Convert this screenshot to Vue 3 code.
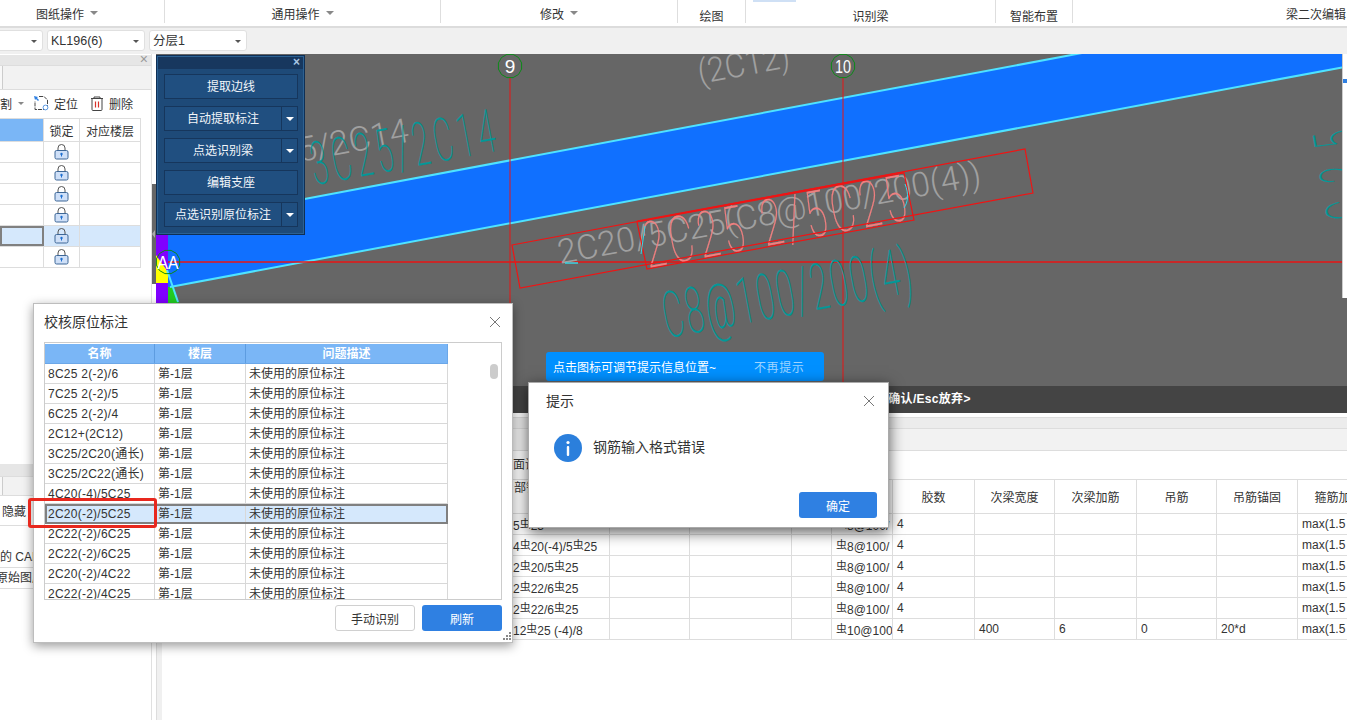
<template>
  <div class="app">
    <div class="toolbar">
      <div
        v-for="group in ribbon"
        :key="group.name"
        class="ribbon-group"
        :class="[group.cls, { low: group.low }]"
      >
        <span>{{ group.name }}</span>
        <i v-if="group.caret" class="caret grey"></i>
        <b v-if="group.name === '识别梁'" class="active-tab"></b>
      </div>
    </div>

    <div class="subbar">
      <div class="select first"><i class="caret dark"></i></div>
      <div class="select">KL196(6)<i class="caret dark"></i></div>
      <div class="select">分层1<i class="caret dark"></i></div>
    </div>

    <div class="main">
      <aside class="left">
        <div class="panel-head"><span class="panel-x">×</span></div>
        <div class="tabs"><div class="tab"></div></div>
        <div class="actions">
          <span class="act-cut">割</span>
          <i class="caret grey small"></i>
          <svg class="act-icon locate" width="16" height="16" viewBox="0 0 16 16">
            <path d="M6 1.5h5l3.5 3.5v9.5H2V6" fill="none" stroke="#444" stroke-width="1" stroke-dasharray="4 1" />
            <path d="M1 1l4 1-1 1 2 2-1 1-2-2-1 1z" fill="#2f80e2" />
            <circle cx="12.5" cy="12.5" r="2.4" fill="#fff" stroke="#5a9ae6" />
          </svg>
          <span class="act-label">定位</span>
          <svg class="act-icon trash" width="14" height="15" viewBox="0 0 14 15">
            <path d="M1 2.5h12M4 2.5V1h6v1.5M2 2.5v11a1 1 0 0 0 1 1h8a1 1 0 0 0 1-1v-11" fill="none" stroke="#444" />
            <path d="M5.5 5.5v6M8.5 5.5v6" stroke="#d8322a" stroke-width="1.2" />
          </svg>
          <span class="act-label">删除</span>
        </div>
        <div class="layer-table">
          <div class="layer-row head">
            <div class="c1"></div>
            <div class="c2">锁定</div>
            <div class="c3">对应楼层</div>
          </div>
          <div v-for="n in 6" :key="n" class="layer-row" :class="{ picked: n === 5 }">
            <div class="c1"></div>
            <div class="c2">
              <svg width="15" height="16" viewBox="0 0 15 16">
                <path d="M4 7V4a3.5 3.5 0 0 1 7 0v3" fill="none" stroke="#555" />
                <rect x="1" y="6.5" width="13" height="8.5" rx="1.5" fill="#cfe0f8" stroke="#3d6797" />
                <circle cx="7.5" cy="10" r="1.2" fill="#1f6fd0" />
                <path d="M7 10h1v2.5H7z" fill="#1f6fd0" />
              </svg>
            </div>
            <div class="c3"></div>
          </div>
        </div>
        <div class="lower">
          <div class="panel-head lower-head"></div>
          <div class="tabs lower-tabs"><div class="tab"></div></div>
          <div class="lower-row tall">隐藏</div>
          <div class="lower-row mid">的 CAD</div>
          <div class="lower-row cut">原始图层</div>
        </div>
      </aside>

      <div class="splitter"><i></i></div>

      <div class="workspace">
        <div class="canvas">
          <svg class="drawing" viewBox="156 54 1191 332" width="1191" height="332">
            <rect x="156" y="230" width="12" height="156" fill="#8000ff" />
            <polygon points="156,255 168,272 173,283 156,283" fill="#ffff00" />
            <polygon points="168,282 172,282 179,303 168,303" fill="#22cc22" />
            <polygon points="168,224.6 1082,53 1342,53 1342,67.4 170,287 168,287" fill="#1070ff" />
            <line x1="168" y1="224.6" x2="1082" y2="53" class="edge" />
            <line x1="170" y1="287" x2="1342" y2="67.4" class="edge" />
            <line x1="167" y1="270" x2="178" y2="302" class="edge" />

            <line x1="168" y1="262" x2="1342" y2="262" class="axis" />
            <line x1="510" y1="78" x2="510" y2="386" class="axis thin" />
            <line x1="843" y1="78" x2="843" y2="386" class="axis thin" />

            <text class="label" transform="translate(700 84) rotate(-10.6)" textLength="93" lengthAdjust="spacingAndGlyphs">(2C12)</text>
            <text class="label" transform="translate(300 162) rotate(-10.6)" textLength="112" lengthAdjust="spacingAndGlyphs">5/2C14</text>
            <text class="label" transform="translate(560 264) rotate(-10.6)" textLength="430" lengthAdjust="spacingAndGlyphs">2C20/5C25(C8@100/200(4))</text>

            <!-- CAD single-line text: tall narrow glyphs on a wide pitch -->
            <text class="cad teal" font-size="60" transform="translate(315 185) rotate(-10.6) scale(.5 1)" textLength="372" lengthAdjust="spacing">3C25/2C14</text>
            <text class="cad teal" font-size="64" transform="translate(667 338) rotate(-10.6) scale(.5 1)" textLength="504" lengthAdjust="spacing">C8@100/200(4)</text>
            <text class="cad teal" font-size="64" transform="translate(1373 215) rotate(-100) scale(.5 1)" textLength="180" lengthAdjust="spacing">C25</text>
            <text class="cad pink" font-size="64" transform="translate(648 268) rotate(-10.6) scale(.6 1)" textLength="443" lengthAdjust="spacing">2C25 2/5C25</text>

            <polygon points="512,245 1025,149 1033,193 520,288" class="box" />
            <polygon points="637,222 904,173 914,220 647,269" class="box" />
            <line x1="637" y1="221" x2="904" y2="172" class="box" />
            <line x1="565" y1="263" x2="578" y2="263" stroke="#36d8e8" stroke-width="1.5" />
            <line x1="645" y1="226" x2="641" y2="254" stroke="#36d8e8" />
            <path d="M905 184c4 10 3 18 -1 24" fill="none" stroke="#36d8e8" />

            <polygon :points="ringPoints(510, 66)" class="ring" />
            <polygon :points="ringPoints(843, 66)" class="ring" />
            <polygon :points="ringPoints(168, 262)" class="ring" />
            <text x="510" y="73" class="ring-text">9</text>
            <text x="843" y="73" class="ring-text" textLength="16" lengthAdjust="spacingAndGlyphs">10</text>
            <text x="168" y="269" class="ring-text" textLength="21" lengthAdjust="spacingAndGlyphs">AA</text>
          </svg>

          <div class="side-sheet"><i></i></div>

          <div class="tool-panel">
            <div class="tool-head"><span>×</span></div>
            <div class="tool-body">
              <div v-for="tool in tools" :key="tool.name" class="tool-btn">
                <span class="tool-name">{{ tool.name }}</span>
                <span v-if="tool.menu" class="tool-menu"><i class="caret white"></i></span>
              </div>
            </div>
          </div>

          <div class="hint">
            <span>点击图标可调节提示信息位置~</span>
            <span class="hint-off">不再提示</span>
          </div>
        </div>

        <div class="status">键确认/Esc放弃&gt;</div>

        <div class="bottom">
          <div class="bottom-gap"></div>
          <div class="bottom-head"></div>
          <div class="bottom-tabs"></div>
          <div class="bottom-tools">面设</div>
          <div class="grid-wrap">
            <table class="grid">
              <colgroup>
                <col v-for="(w, i) in gridCols" :key="i" :style="{ width: w + 'px' }" />
              </colgroup>
              <thead>
                <tr>
                  <th></th>
                  <th class="top-left">部钢</th>
                  <th></th>
                  <th></th>
                  <th></th>
                  <th></th>
                  <th>胶数</th>
                  <th>次梁宽度</th>
                  <th>次梁加筋</th>
                  <th>吊筋</th>
                  <th>吊筋锚固</th>
                  <th>箍筋加密</th>
                </tr>
              </thead>
              <tbody>
                <tr v-for="(row, i) in gridRows" :key="i">
                  <td></td>
                  <td>
                    <template v-for="(part, k) in row.bar" :key="k">
                      <span v-if="part === '#'" class="rebar">虫</span>
                      <template v-else>{{ part }}</template>
                    </template>
                  </td>
                  <td></td>
                  <td></td>
                  <td></td>
                  <td><span class="rebar">虫</span>{{ row.hoop }}</td>
                  <td>4</td>
                  <td>{{ row.w }}</td>
                  <td>{{ row.add }}</td>
                  <td>{{ row.hang }}</td>
                  <td>{{ row.anchor }}</td>
                  <td>max(1.5</td>
                </tr>
              </tbody>
            </table>
          </div>
        </div>
      </div>
    </div>

    <div class="check-dialog">
      <div class="dialog-title">校核原位标注</div>
      <svg class="dialog-close" width="12" height="12" viewBox="0 0 12 12">
        <path d="M1 1l10 10M11 1L1 11" stroke="#777" fill="none" />
      </svg>
      <div class="check-table">
        <div class="check-inner">
          <div class="check-row check-head">
            <div class="k1">名称</div>
            <div class="k2">楼层</div>
            <div class="k3">问题描述</div>
          </div>
          <div
            v-for="(name, i) in checks"
            :key="i"
            class="check-row"
            :class="{ selected: i === 7 }"
          >
            <div class="k1">{{ name }}</div>
            <div class="k2">第-1层</div>
            <div class="k3">未使用的原位标注</div>
          </div>
        </div>
        <div class="thumb"></div>
      </div>
      <div class="dialog-foot">
        <button class="btn ghost">手动识别</button>
        <button class="btn solid">刷新</button>
      </div>
      <svg class="grip" width="9" height="9" viewBox="0 0 9 9">
        <path d="M7 0h2v2H7zM4 3h2v2H4zM7 3h2v2H7zM1 6h2v2H1zM4 6h2v2H4zM7 6h2v2H7z" fill="#888" />
      </svg>
      <div class="red-mark"></div>
    </div>

    <div class="alert">
      <div class="alert-title">提示</div>
      <svg class="alert-close" width="12" height="12" viewBox="0 0 12 12">
        <path d="M1 1l10 10M11 1L1 11" stroke="#777" fill="none" />
      </svg>
      <div class="alert-body">
        <svg width="28" height="28" viewBox="0 0 28 28">
          <circle cx="14" cy="14" r="14" fill="#2b7fdc" />
          <circle cx="14" cy="8.5" r="1.6" fill="#fff" />
          <rect x="12.8" y="12" width="2.4" height="10" rx="1" fill="#fff" />
        </svg>
        <span>钢筋输入格式错误</span>
      </div>
      <div class="alert-foot">
        <button class="btn solid">确定</button>
      </div>
    </div>
  </div>
</template>

<script setup>
const ribbon = [
  { name: '图纸操作', caret: true, cls: 'g-first' },
  { name: '通用操作', caret: true, cls: 'g-common' },
  { name: '修改', caret: true, cls: 'g-edit' },
  { name: '绘图', low: true, cls: 'g-draw' },
  { name: '识别梁', low: true, cls: 'g-beam' },
  { name: '智能布置', low: true, cls: 'g-smart' },
  { name: '梁二次编辑', cls: 'g-second' }
]

const tools = [
  { name: '提取边线' },
  { name: '自动提取标注', menu: true },
  { name: '点选识别梁', menu: true },
  { name: '编辑支座' },
  { name: '点选识别原位标注', menu: true }
]

const checks = [
  '8C25 2(-2)/6',
  '7C25 2(-2)/5',
  '6C25 2(-2)/4',
  '2C12+(2C12)',
  '3C25/2C20(通长)',
  '3C25/2C22(通长)',
  '4C20(-4)/5C25',
  '2C20(-2)/5C25',
  '2C22(-2)/6C25',
  '2C22(-2)/6C25',
  '2C20(-2)/4C22',
  '2C22(-2)/4C25'
]

const gridCols = [346, 101, 80, 102, 40, 61, 82, 80, 82, 80, 81, 82]

const gridRows = [
  { bar: ['5', '#', '25'], hoop: '8@100/' },
  { bar: ['4', '#', '20(-4)/5', '#', '25'], hoop: '8@100/' },
  { bar: ['2', '#', '20/5', '#', '25'], hoop: '8@100/' },
  { bar: ['2', '#', '22/6', '#', '25'], hoop: '8@100/' },
  { bar: ['2', '#', '22/6', '#', '25'], hoop: '8@100/' },
  { bar: ['12', '#', '25 (-4)/8'], hoop: '10@100', w: '400', add: '6', hang: '0', anchor: '20*d' }
]

// axis bubbles in the drawing are faceted, not true circles
function ringPoints(cx, cy) {
  const pts = []
  for (let i = 0; i < 12; i++) {
    const a = (i * Math.PI) / 6 + Math.PI / 12
    pts.push((cx + 12 * Math.cos(a)).toFixed(1) + ',' + (cy + 12 * Math.sin(a)).toFixed(1))
  }
  return pts.join(' ')
}
</script>

<style scoped>
.app {
  position: relative;
  width: 1347px;
  height: 720px;
  overflow: hidden;
  display: flex;
  flex-direction: column;
  background: #fff;
  color: #333;
  font-family: "Liberation Sans", "Noto Sans CJK SC", sans-serif;
  font-size: 12px;
}

i {
  display: block;
}

.caret {
  width: 0;
  height: 0;
  border-left: 4px solid transparent;
  border-right: 4px solid transparent;
}

.caret.grey {
  border-top: 4px solid #888;
}

.caret.small {
  border-left-width: 3px;
  border-right-width: 3px;
  border-top-width: 3px;
}

.caret.dark {
  border-left-width: 3px;
  border-right-width: 3px;
  border-top: 3px solid #555;
}

.caret.white {
  border-top: 4px solid #fff;
}

/* ribbon */
.toolbar {
  flex: none;
  height: 26px;
  display: flex;
  border-bottom: 2px solid #dcdcdc;
}

.ribbon-group {
  position: relative;
  height: 23px;
  flex: none;
  display: flex;
  align-items: center;
  justify-content: center;
  gap: 6px;
  border-right: 1px solid #dedede;
  padding-top: 3px;
  box-sizing: border-box;
}

.ribbon-group.low {
  padding-top: 8px;
}

.g-first {
  width: 197px;
  margin-left: -32px;
  padding-left: 2px;
}

.g-common {
  width: 276px;
}

.g-edit {
  width: 237px;
}

.g-draw {
  width: 68px;
}

.g-beam {
  width: 250px;
}

.g-smart {
  width: 77px;
}

.g-second {
  width: 486px;
  border-right: 0;
}

.active-tab {
  position: absolute;
  left: 7px;
  top: 0;
  width: 43px;
  height: 2px;
  background: #cfe0f5;
}

.subbar {
  flex: none;
  height: 26px;
  display: flex;
  gap: 4px;
  padding-top: 2px;
  box-sizing: border-box;
  background: #f0f0f0;
}

.select {
  position: relative;
  width: 98px;
  height: 21px;
  line-height: 20px;
  padding-left: 3px;
  box-sizing: border-box;
  background: #fff;
  border: 1px solid #e0e0e0;
  border-radius: 3px;
  font-size: 12.5px;
}

.select.first {
  width: 53px;
  margin-left: -10px;
}

.select .caret {
  position: absolute;
  right: 5px;
  top: 9px;
}

.main {
  flex: 1;
  min-height: 0;
  display: flex;
}

/* left column */
.left {
  flex: none;
  width: 152px;
  display: flex;
  flex-direction: column;
  border-right: 1px solid #e0e0e0;
  box-sizing: border-box;
}

.panel-head {
  height: 10px;
  margin-top: 1px;
  position: relative;
  background: #e6e6e6;
}

.panel-x {
  position: absolute;
  right: 3px;
  top: -3px;
  color: #999;
  font-size: 14px;
  line-height: 14px;
}

.tabs {
  height: 23px;
  background: #f2f2f2;
  border-top: 1px solid #ddd;
  border-bottom: 1px solid #ddd;
}

.tab {
  width: 2px;
  height: 100%;
  background: #f8f8f8;
  border-right: 1px solid #ccc;
}

.actions {
  height: 28px;
  display: flex;
  align-items: center;
  padding-bottom: 2px;
  box-sizing: border-box;
}

.act-cut {
  width: 11px;
}

.actions .caret {
  margin-left: 7px;
}

.act-icon.locate {
  margin-left: 9px;
}

.act-icon.trash {
  margin-left: 12px;
}

.act-label {
  margin-left: 5px;
}

.layer-table {
  width: 141px;
  flex: none;
}

.layer-row {
  display: flex;
  height: 21px;
  box-sizing: border-box;
  border-bottom: 1px solid #ddd;
}

.layer-row.head {
  height: 24px;
  border-top: 1px solid #ddd;
}

.layer-row > div {
  display: flex;
  align-items: center;
  justify-content: center;
  box-sizing: border-box;
  border-right: 1px solid #ddd;
}

.c1 {
  width: 44px;
}

.c2 {
  width: 36px;
}

.c3 {
  width: 61px;
}

.head .c1 {
  background: #7ab6f6;
}

.picked {
  background: #d5e8fc;
}

.picked .c1 {
  border: 2px solid #808080;
}

.lower {
  margin-top: 196px;
}

.lower-head {
  margin-top: 0;
  height: 12px;
}

.lower-tabs {
  height: 20px;
  box-sizing: border-box;
}

.lower-row {
  height: 21px;
  line-height: 20px;
  box-sizing: border-box;
  border-bottom: 1px solid #ddd;
  padding-left: 2px;
  white-space: nowrap;
  overflow: hidden;
}

.lower-row.tall {
  height: 30px;
  line-height: 33px;
}

.lower-row.mid {
  height: 42px;
  line-height: 62px;
  padding-left: 0;
}

.lower-row.cut {
  padding-left: 0;
  text-indent: -4px;
}

.splitter {
  flex: none;
  width: 4px;
  height: 100px;
  margin-top: 130px;
  position: relative;
  background: #666;
}

.splitter i {
  position: absolute;
  left: 0;
  top: 46px;
  border-top: 4px solid transparent;
  border-bottom: 4px solid transparent;
  border-right: 3px solid #aaa;
}

/* drawing area */
.workspace {
  flex: 1;
  min-width: 0;
  display: flex;
  flex-direction: column;
}

.canvas {
  position: relative;
  flex: none;
  height: 332px;
  background: #666;
  overflow: hidden;
}

.drawing {
  display: block;
}

.edge {
  stroke: #4fe3ff;
  stroke-width: 2;
}

.axis {
  stroke: #e81414;
  stroke-width: 1.5;
}

.axis.thin {
  stroke-width: 1;
}

.label {
  fill: #a0a0a0;
  font-family: Roboto, "Liberation Sans", sans-serif;
  font-weight: 300;
  font-size: 34px;
}

.cad {
  font-family: Roboto, "Liberation Sans", sans-serif;
  font-weight: 100;
  stroke-width: 0.3;
}

.cad.teal {
  fill: #009999;
  stroke: #009999;
}

.cad.pink {
  fill: #f08080;
  stroke: #f08080;
}

.box {
  fill: none;
  stroke: #f01414;
  stroke-width: 1.2;
}

.ring {
  fill: none;
  stroke: #0c8a18;
  stroke-width: 1;
}

.ring-text {
  fill: #fff;
  font-size: 19px;
  text-anchor: middle;
}

.side-sheet {
  position: absolute;
  right: 0;
  top: 0;
  width: 5px;
  height: 244px;
  background: #fff;
  border-left: 1px solid #ccc;
  box-sizing: border-box;
}

.side-sheet i {
  position: absolute;
  left: 0;
  top: 25px;
  width: 4px;
  height: 4px;
  background: #2f80e2;
}

.tool-panel {
  position: absolute;
  left: 0;
  top: 1px;
  width: 149px;
  height: 180px;
  box-sizing: border-box;
  background: #1e4a78;
  border: 1px solid #0f2f55;
  box-shadow: inset 0 0 0 1px #2c6192;
}

.tool-head {
  height: 12px;
  margin: 1px 1px 0;
  background: #17375e;
  position: relative;
}

.tool-head span {
  position: absolute;
  right: 3px;
  top: -2px;
  color: #a9c6e4;
  font-size: 12px;
  line-height: 14px;
  font-weight: bold;
}

.tool-body {
  display: flex;
  flex-direction: column;
  gap: 7px;
  padding: 5px 6px 0 7px;
}

.tool-btn {
  display: flex;
  height: 25px;
  box-sizing: border-box;
  background: #204f80;
  border: 1px solid #16365c;
  color: #f2f6fa;
}

.tool-name {
  flex: 1;
  text-align: center;
  line-height: 24px;
}

.tool-menu {
  flex: none;
  width: 16px;
  box-sizing: border-box;
  display: flex;
  align-items: center;
  justify-content: center;
  border-left: 1px solid #16365c;
}

.hint {
  position: absolute;
  left: 390px;
  top: 298px;
  width: 278px;
  height: 29px;
  display: flex;
  align-items: center;
  padding-left: 7px;
  box-sizing: border-box;
  background: #0090ff;
  border-radius: 3px;
  color: #fff;
}

.hint-off {
  margin-left: 38px;
  color: #9fd4ff;
  letter-spacing: 0.6px;
}

.status {
  flex: none;
  height: 27px;
  line-height: 27px;
  padding-left: 720px;
  background: #444;
  color: #fff;
  font-weight: bold;
  letter-spacing: 0.3px;
  white-space: nowrap;
}

/* bottom property table */
.bottom {
  flex: 1;
  min-height: 0;
  overflow: hidden;
  background: linear-gradient(to right, #ddd 1px, #f0f0f0 1px, #f0f0f0 6px, #fff 6px);
}

.bottom-gap {
  height: 4px;
  background: #fff;
  border-bottom: 1px solid #ddd;
}

.bottom-head {
  height: 10px;
  background: #ececec;
  border-bottom: 1px solid #ddd;
}

.bottom-tabs {
  height: 21px;
  background: #f2f2f2;
  border-bottom: 1px solid #ddd;
}

.bottom-tools {
  height: 28px;
  padding-left: 357px;
  line-height: 28px;
  white-space: nowrap;
}

.grid-wrap {
  padding-left: 6px;
  overflow: hidden;
}

.grid {
  width: 1217px;
  table-layout: fixed;
  border-collapse: collapse;
  white-space: nowrap;
  background: #fff;
}

.grid th,
.grid td {
  height: 21px;
  padding: 0 0 0 4px;
  box-sizing: border-box;
  border: 1px solid #ddd;
  overflow: hidden;
  text-align: left;
  font-weight: normal;
  color: #333;
}

.grid th {
  height: 34px;
  padding: 0;
  text-align: center;
}

.grid th.top-left {
  text-align: left;
  vertical-align: top;
  padding: 0 0 0 5px;
  line-height: 16px;
}

.rebar {
  font-size: 11px;
  vertical-align: 2px;
}

/* dialogs */
.check-dialog {
  position: absolute;
  left: 33px;
  top: 303px;
  width: 480px;
  height: 340px;
  box-sizing: border-box;
  background: #fff;
  border: 1px solid #bdbdbd;
  box-shadow: 0 3px 10px rgba(0, 0, 0, 0.4);
}

.dialog-title {
  position: absolute;
  left: 10px;
  top: 8px;
  font-size: 14px;
  line-height: 20px;
}

.dialog-close {
  position: absolute;
  right: 11px;
  top: 12px;
}

.check-table {
  position: absolute;
  left: 10px;
  top: 38px;
  width: 458px;
  height: 258px;
  box-sizing: border-box;
  border: 1px solid #ccc;
  padding: 1px 0 0;
  overflow: hidden;
}

.check-inner {
  width: 403px;
}

.check-row {
  display: flex;
  height: 20px;
  box-sizing: border-box;
  border-bottom: 1px solid #d8d8d8;
  border-right: 1px solid #d8d8d8;
  line-height: 21px;
  white-space: nowrap;
}

.check-row > div {
  box-sizing: border-box;
  padding-left: 3px;
  border-right: 1px solid #d8d8d8;
}

.check-row > div:last-child {
  border-right: 0;
}

.k1 {
  width: 110px;
  letter-spacing: 0.25px;
}

.k2 {
  width: 91px;
}

.k3 {
  flex: 1;
}

.check-head {
  background: #7ab6f6;
  color: #fff;
  font-weight: bold;
  border-color: #6ba7e8;
}

.check-head > div {
  padding-left: 0;
  text-align: center;
  border-color: #5d9ce0;
  letter-spacing: 0;
}

.check-row.selected {
  background: #d5e8fc;
  outline: 2px solid #808080;
  outline-offset: -2px;
}

.thumb {
  position: absolute;
  left: 445px;
  top: 21px;
  width: 8px;
  height: 15px;
  border-radius: 4px;
  background: #ccc;
}

.dialog-foot {
  position: absolute;
  right: 10px;
  top: 301px;
  display: flex;
  gap: 7px;
}

.btn {
  display: block;
  width: 80px;
  height: 26px;
  padding: 0;
  box-sizing: border-box;
  border-radius: 3px;
  font-family: inherit;
  font-size: 12px;
}

.btn.ghost {
  background: #fff;
  border: 1px solid #d0d0d0;
  color: #333;
}

.btn.solid {
  background: #2f80e2;
  border: 0;
  color: #fff;
}

.grip {
  position: absolute;
  right: 1px;
  bottom: 1px;
}

.red-mark {
  position: absolute;
  left: -6px;
  top: 194px;
  width: 129px;
  height: 30px;
  box-sizing: border-box;
  border: 3px solid #e8281e;
  border-radius: 3px;
}

.alert {
  position: absolute;
  left: 528px;
  top: 382px;
  width: 361px;
  height: 146px;
  box-sizing: border-box;
  background: #fff;
  border: 1px solid #aaa;
  box-shadow: 0 4px 14px rgba(0, 0, 0, 0.65);
}

.alert-title {
  position: absolute;
  left: 17px;
  top: 8px;
  font-size: 14px;
  line-height: 20px;
}

.alert-close {
  position: absolute;
  right: 13px;
  top: 12px;
}

.alert-body {
  position: absolute;
  left: 25px;
  top: 51px;
  display: flex;
  align-items: center;
  gap: 11px;
  font-size: 14px;
}

.alert-body span {
  margin-top: -4px;
}

.alert-foot {
  position: absolute;
  right: 11px;
  top: 109px;
}

.alert-foot .btn {
  width: 78px;
}
</style>

<style>
html,
body {
  margin: 0;
  background: #fff;
}
</style>
